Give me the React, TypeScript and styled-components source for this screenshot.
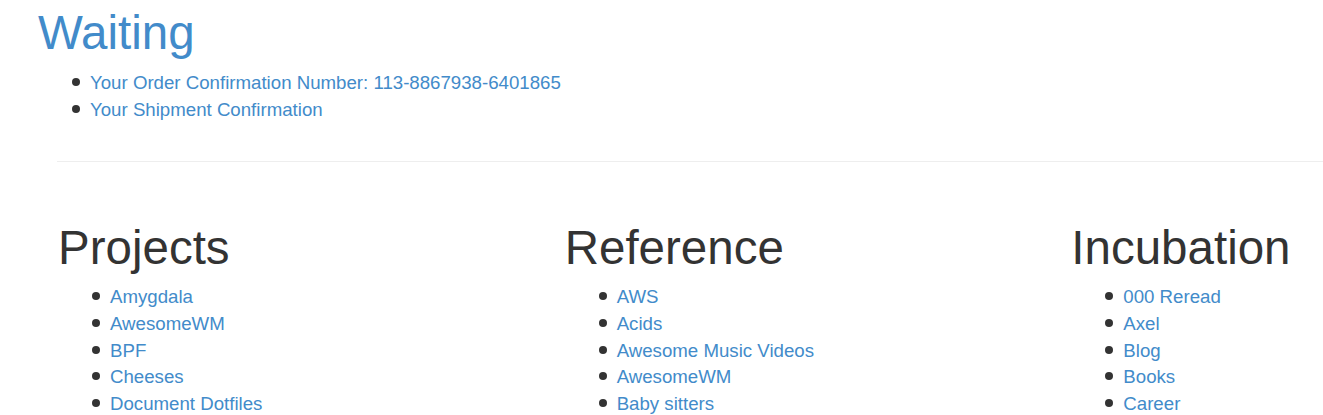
import React from "react";
import styled, { createGlobalStyle } from "styled-components";

const GlobalStyle = createGlobalStyle`
  html, body {
    margin: 0;
    padding: 0;
    background: #fff;
    overflow: hidden;
  }
  body {
    font-family: "Liberation Sans", Arial, sans-serif;
    font-size: 18.67px;
    line-height: 26.75px;
    color: #333;
  }
`;

const Page = styled.div`
  width: 1323px;
`;

const Header = styled.section`
  padding-left: 38px;
`;

const Title = styled.h1<{ $link?: boolean; $top?: number; $bottom?: number }>`
  margin: ${(p) => p.$top ?? 34}px 0 ${(p) => p.$bottom ?? 10}px;
  font-size: 47.5px;
  font-weight: 400;
  line-height: 1.1;
  color: ${(p) => (p.$link ? "#428bca" : "#333")};
`;

const LinkList = styled.ul`
  margin: 0;
  padding-left: 52px;
  list-style: none;
`;

const Item = styled.li`
  &::before {
    content: "";
    display: inline-block;
    width: 8px;
    height: 8px;
    border-radius: 50%;
    background: #333;
    margin-left: -18px;
    margin-right: 10px;
    vertical-align: 3px;
  }
`;

const Link = styled.a`
  color: #428bca;
  text-decoration: none;
`;

const Divider = styled.hr`
  margin: 37px 0 26px 57px;
  border: 0;
  border-top: 1px solid #eee;
`;

const Columns = styled.div`
  display: grid;
  grid-template-columns: repeat(3, 506.67px);
  padding-left: 58px;
`;

const Column = styled.div``;

const sections: { title: string; items: string[] }[] = [
  {
    title: "Projects",
    items: ["Amygdala", "AwesomeWM", "BPF", "Cheeses", "Document Dotfiles"],
  },
  {
    title: "Reference",
    items: ["AWS", "Acids", "Awesome Music Videos", "AwesomeWM", "Baby sitters"],
  },
  {
    title: "Incubation",
    items: ["000 Reread", "Axel", "Blog", "Books", "Career"],
  },
];

export default function App() {
  return (
    <Page>
      <GlobalStyle />
      <Header>
        <Title $link $top={7} $bottom={11}>Waiting</Title>
        <LinkList>
          <Item>
            <Link href="#">Your Order Confirmation Number: 113-8867938-6401865</Link>
          </Item>
          <Item>
            <Link href="#">Your Shipment Confirmation</Link>
          </Item>
        </LinkList>
      </Header>
      <Divider />
      <Columns>
        {sections.map((s) => (
          <Column key={s.title}>
            <Title>{s.title}</Title>
            <LinkList>
              {s.items.map((it) => (
                <Item key={it}>
                  <Link href="#">{it}</Link>
                </Item>
              ))}
            </LinkList>
          </Column>
        ))}
      </Columns>
    </Page>
  );
}
